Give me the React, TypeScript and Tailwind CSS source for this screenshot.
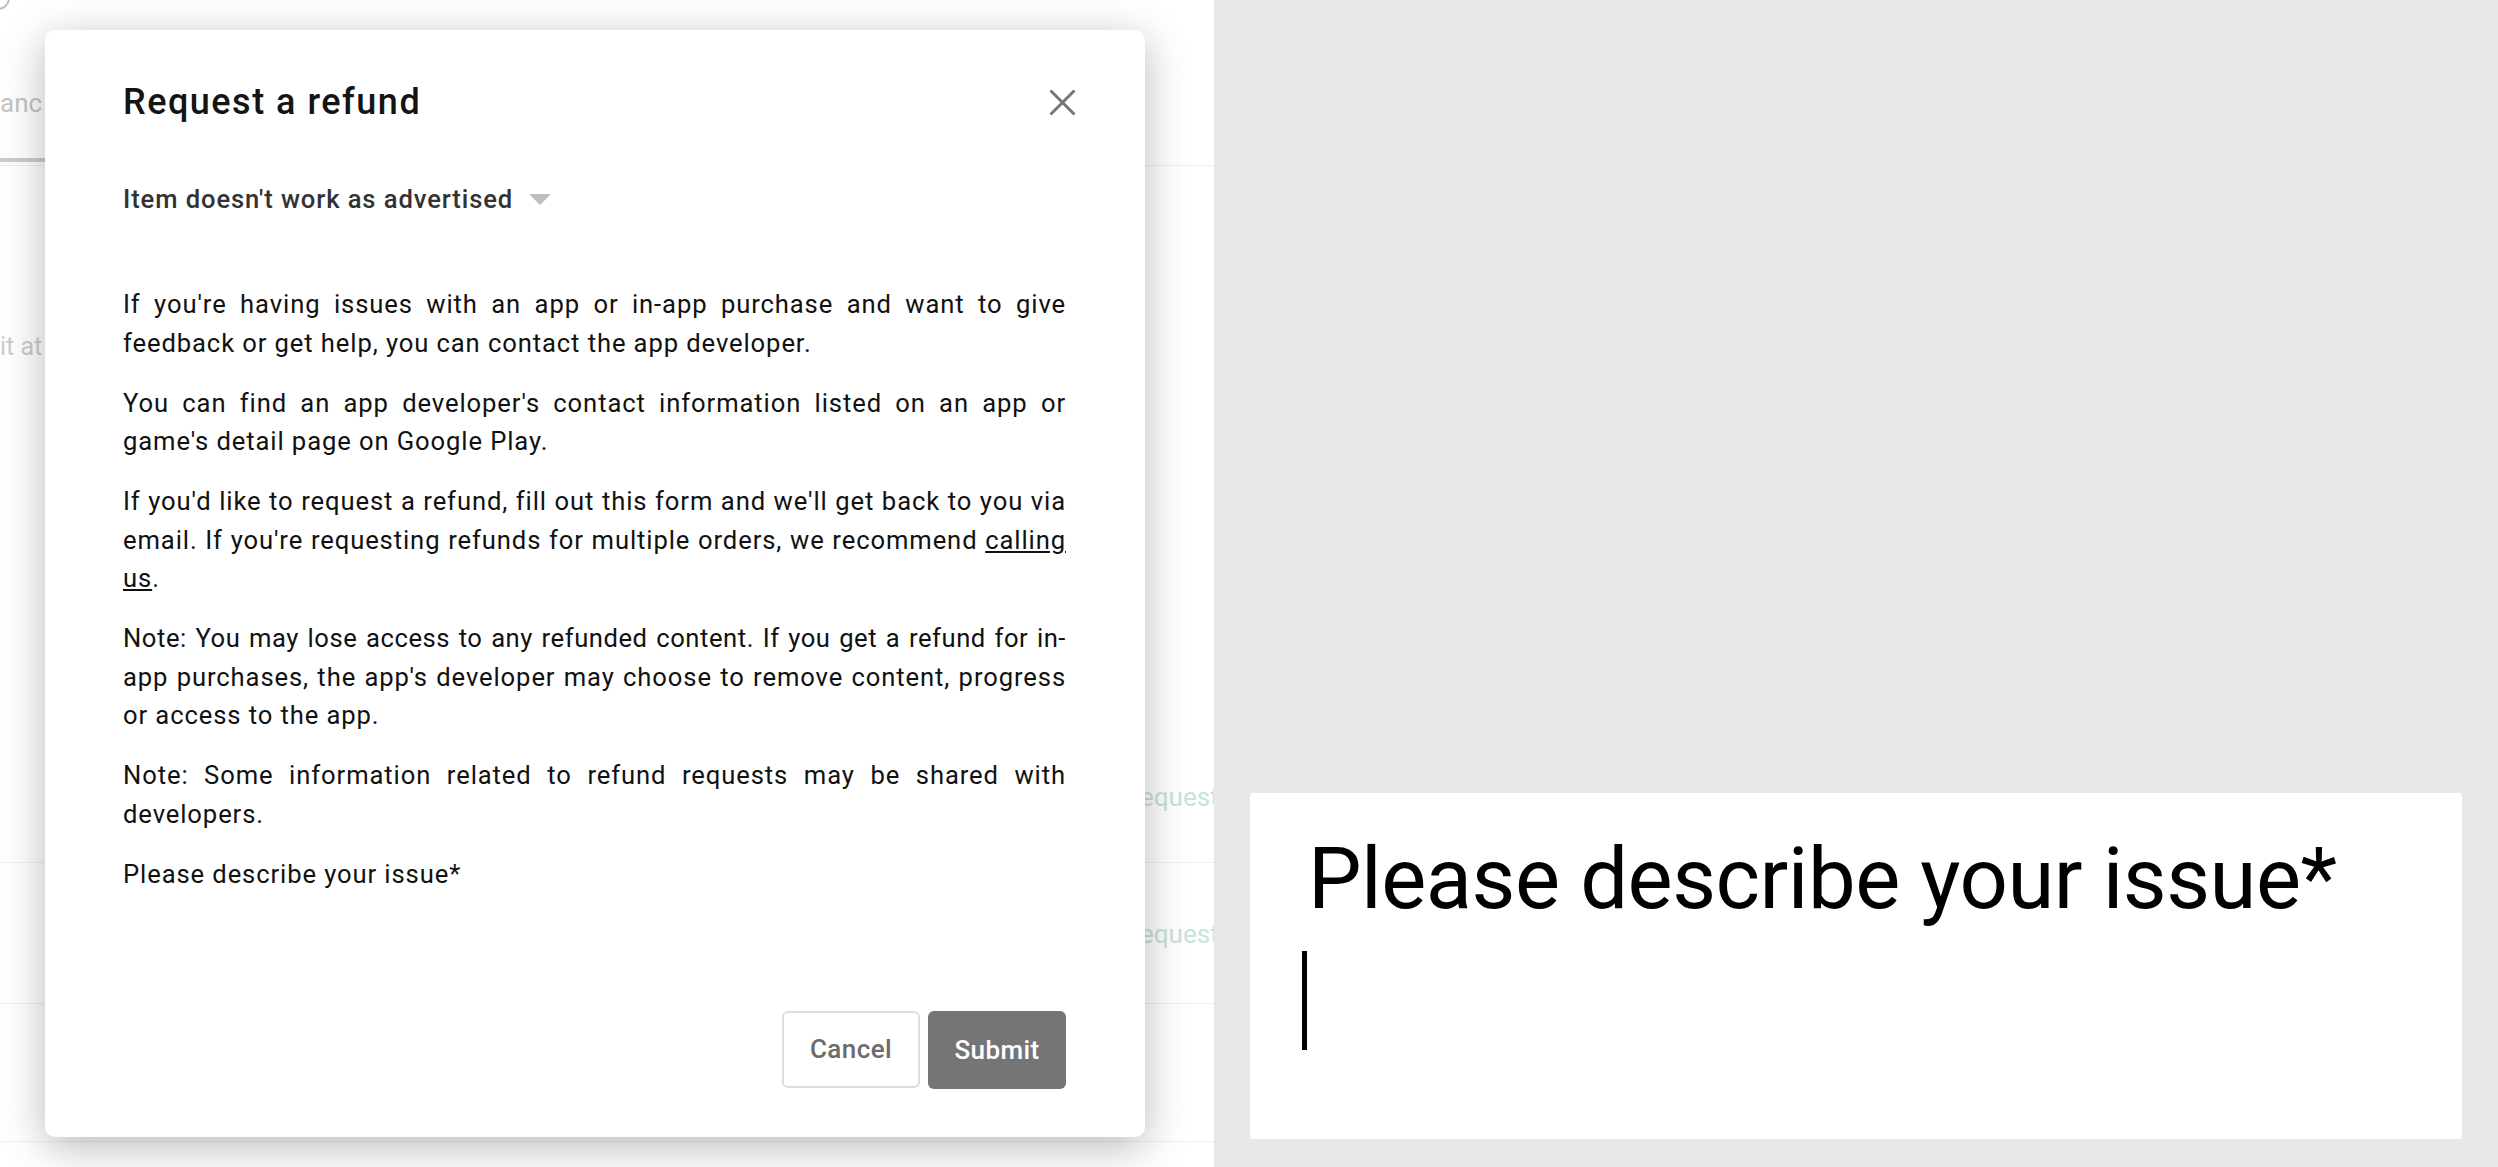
import { useState } from 'react'

const PARAGRAPHS = [
  "If you're having issues with an app or in-app purchase and want to give feedback or get help, you can contact the app developer.",
  "You can find an app developer's contact information listed on an app or game's detail page on Google Play.",
]

function PageBehind() {
  return (
    <div className="flex w-full flex-col">
      <div className="absolute -left-[14px] -top-[14px] h-[24px] w-[24px] rounded-full border-2 border-[#bdbdbd]" />
      <div className="flex h-[166px] flex-col border-b border-[#eeeeee]">
        <div className="flex h-[162px] flex-col justify-between pt-[84px]">
          <span className="text-[26px] leading-[38px] text-[#c4c4c4]">anc</span>
          <div className="h-[4px] w-[220px] bg-[#cccccc]" />
        </div>
      </div>
      <div className="h-[697px] border-b border-[#f0f0f0] pt-[162px]">
        <span className="text-[25px] leading-[38px] text-[#cccccc]">it at</span>
        <div className="mt-[412px] whitespace-nowrap pl-[1124px] text-[26px] leading-[38px] text-[#c8e3d8]">
          Request refund
        </div>
      </div>
      <div className="h-[141px] whitespace-nowrap border-b border-[#f0f0f0] pl-[1124px] pt-[52px] text-[26px] leading-[38px] text-[#c8e3d8]">
        Request refund
      </div>
      <div className="h-[138px] border-b border-[#f0f0f0]" />
    </div>
  )
}

function RefundDialog() {
  const [reason] = useState("Item doesn't work as advertised")
  return (
    <div className="absolute left-[45px] top-[30px] flex h-[1107px] w-[1100px] flex-col rounded-[10px] bg-white pb-[48px] pl-[78px] pr-[79px] pt-[50px] shadow-[0_10px_44px_rgba(0,0,0,0.28)]">
      <div className="flex h-[44px] items-center justify-between">
        <h2 className="text-[36px] font-medium leading-[44px] tracking-[1.5px] text-[#141414]">Request a refund</h2>
        <button className="-mr-[10px] flex h-[27px] w-[27px] items-center justify-center">
          <svg width="27" height="27" viewBox="0 0 27 27" fill="none" stroke="#757575" strokeWidth="3">
            <path d="M1.5 1.5 25.5 25.5M25.5 1.5 1.5 25.5" />
          </svg>
        </button>
      </div>

      <div className="mt-[56px] flex items-center gap-[16px] text-[25.6px] font-medium leading-[38.4px] tracking-[0.9px] text-[#333333]">
        <span>{reason}</span>
        <svg width="22" height="11" viewBox="0 0 22 11">
          <polygon points="0,0 22,0 11,11" fill="#bdbdbd" />
        </svg>
      </div>

      <div className="mt-[67px] flex flex-col gap-[21.7px] text-justify text-[25.6px] leading-[38.4px] tracking-[0.9px] text-[#111111]">
        {PARAGRAPHS.map((p) => (
          <p key={p}>{p}</p>
        ))}
        <p>
          If you'd like to request a refund, fill out this form and we'll get back to you via email. If you're
          requesting refunds for multiple orders, we recommend <a className="underline">calling us</a>.
        </p>
        <p>
          <span className="tracking-[0.55px]">
            Note: You may lose access to any refunded content. If you get a refund for in-
          </span>
          app purchases, the app's developer may choose to remove content, progress or access to the app.
        </p>
        <p>Note: Some information related to refund requests may be shared with developers.</p>
        <p className="text-left">Please describe your issue*</p>
      </div>

      <div className="mt-auto flex justify-end gap-[8px]">
        <button className="h-[77px] w-[138px] rounded-[6px] border-2 border-[#dddddd] bg-white text-[26px] font-medium tracking-[0.4px] text-[#6b6b6b]">
          Cancel
        </button>
        <button className="h-[78px] w-[138px] rounded-[6px] bg-[#757575] text-[26px] font-medium tracking-[0.4px] text-white">
          Submit
        </button>
      </div>
    </div>
  )
}

export default function App() {
  return (
    <div className="flex h-[1167px] w-[2498px] overflow-hidden bg-white font-['Roboto',sans-serif]">
      <div className="relative w-[1214px] shrink-0 overflow-hidden bg-white">
        <PageBehind />
        <RefundDialog />
      </div>
      <div className="flex flex-1 flex-col justify-end bg-[#e8e8e8] px-[36px] pb-[28px]">
        <div className="h-[346px] rounded-[4px] bg-white pl-[58px] pt-[34px]">
          <p className="text-[85px] leading-[104px] tracking-[-0.5px] text-black">Please describe your issue*</p>
          <div className="-ml-[6px] mt-[20px] h-[99px] w-[5px] bg-black" />
        </div>
      </div>
    </div>
  )
}
